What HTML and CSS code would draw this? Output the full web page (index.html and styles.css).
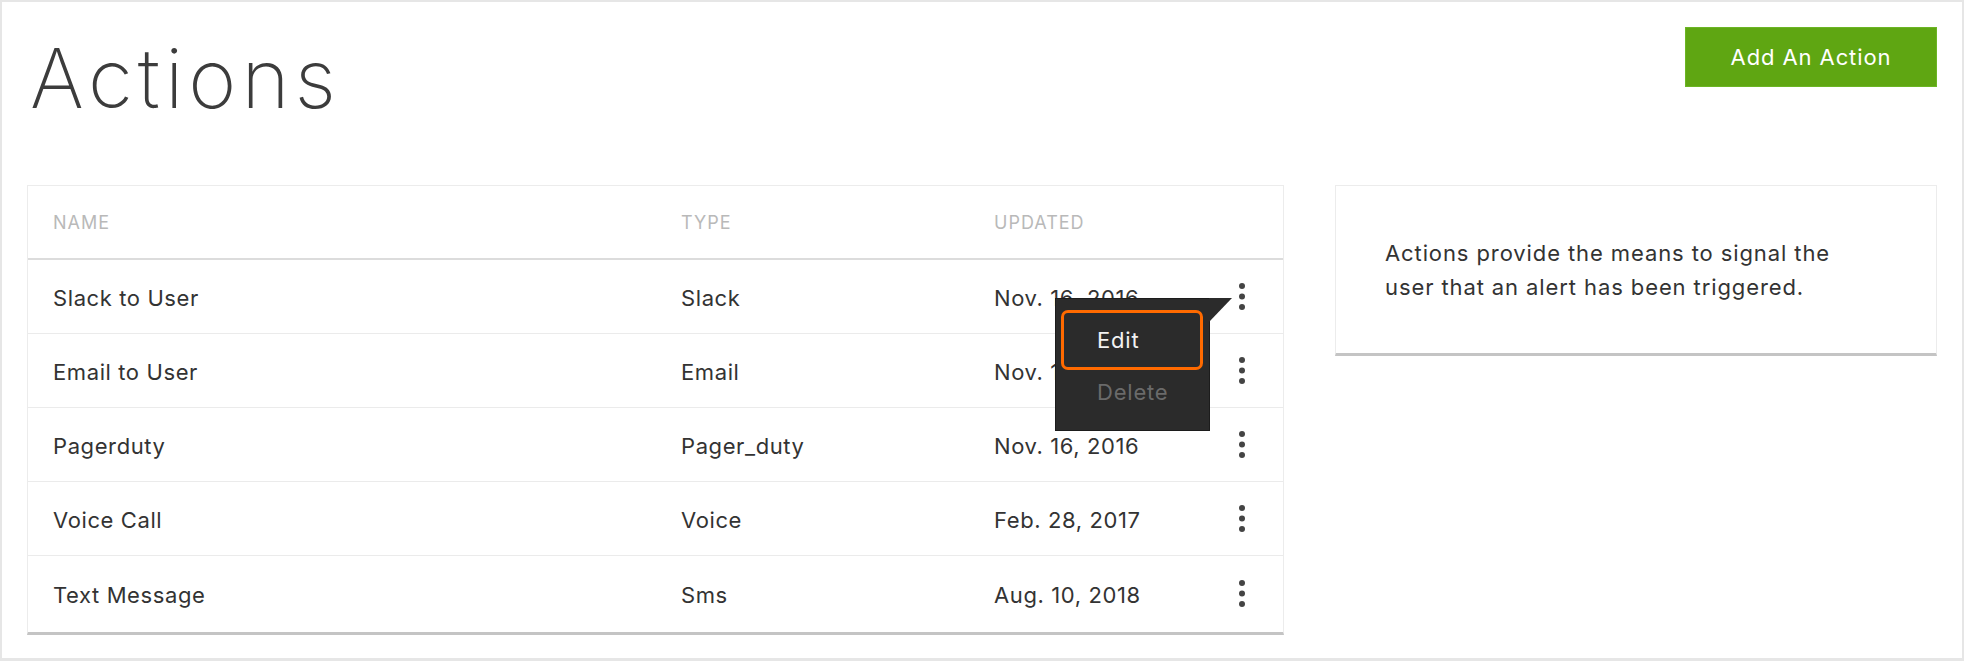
FILE: index.html
```html
<!DOCTYPE html>
<html lang="en">
<head>
<meta charset="utf-8">
<title>Actions</title>
<link rel="stylesheet" href="styles.css">
</head>
<body>
<div class="frame">
  <header class="topbar">
    <h1 class="title">Actions</h1>
    <button class="add-btn" type="button">Add An Action</button>
  </header>
  <main class="content">
    <section class="table-card">
      <div class="row head">
        <div class="cell">Name</div>
        <div class="cell">Type</div>
        <div class="cell">Updated</div>
        <div class="cell"></div>
      </div>
      <div class="row">
        <div class="cell">Slack to User</div>
        <div class="cell">Slack</div>
        <div class="cell">Nov. 16, 2016</div>
        <div class="cell kebab-cell"><svg class="kebab" width="6" height="28" viewBox="0 0 6 28"><circle cx="3" cy="3" r="3"/><circle cx="3" cy="13.5" r="3"/><circle cx="3" cy="24" r="3"/></svg></div>
      </div>
      <div class="row">
        <div class="cell">Email to User</div>
        <div class="cell">Email</div>
        <div class="cell">Nov. 16, 2016</div>
        <div class="cell kebab-cell"><svg class="kebab" width="6" height="28" viewBox="0 0 6 28"><circle cx="3" cy="3" r="3"/><circle cx="3" cy="13.5" r="3"/><circle cx="3" cy="24" r="3"/></svg></div>
      </div>
      <div class="row">
        <div class="cell">Pagerduty</div>
        <div class="cell">Pager_duty</div>
        <div class="cell">Nov. 16, 2016</div>
        <div class="cell kebab-cell"><svg class="kebab" width="6" height="28" viewBox="0 0 6 28"><circle cx="3" cy="3" r="3"/><circle cx="3" cy="13.5" r="3"/><circle cx="3" cy="24" r="3"/></svg></div>
      </div>
      <div class="row">
        <div class="cell">Voice Call</div>
        <div class="cell">Voice</div>
        <div class="cell">Feb. 28, 2017</div>
        <div class="cell kebab-cell"><svg class="kebab" width="6" height="28" viewBox="0 0 6 28"><circle cx="3" cy="3" r="3"/><circle cx="3" cy="13.5" r="3"/><circle cx="3" cy="24" r="3"/></svg></div>
      </div>
      <div class="row last">
        <div class="cell">Text Message</div>
        <div class="cell">Sms</div>
        <div class="cell">Aug. 10, 2018</div>
        <div class="cell kebab-cell"><svg class="kebab" width="6" height="28" viewBox="0 0 6 28"><circle cx="3" cy="3" r="3"/><circle cx="3" cy="13.5" r="3"/><circle cx="3" cy="24" r="3"/></svg></div>
      </div>
      <div class="menu">
        <div class="menu-item active">Edit</div>
        <div class="menu-item disabled">Delete</div>
      </div>
    </section>
    <aside class="info-card">
      <p class="info-text">Actions provide the means to signal the<br>user that an alert has been triggered.</p>
    </aside>
  </main>
</div>
</body>
</html>
```
FILE: styles.css
```css
html, body {
  margin: 0;
  padding: 0;
  background: #ffffff;
}

body {
  font-family: "Inter", "Lato", sans-serif;
  color: #333333;
}

.frame {
  width: 1964px;
  height: 661px;
  box-sizing: border-box;
  border: 2px solid #e6e6e6;
  border-bottom-width: 3px;
  background: #ffffff;
  overflow: hidden;
}

.topbar {
  display: flex;
  justify-content: space-between;
  align-items: flex-start;
  height: 183px;
  box-sizing: border-box;
  padding: 25px 25px 0 28px;
}

.title {
  margin: 11px 0 0 0;
  font-family: "Inter", sans-serif;
  font-weight: 200;
  font-size: 82px;
  line-height: 1;
  color: #3c3c3c;
  letter-spacing: 5px;
}

.add-btn {
  width: 252px;
  height: 60px;
  border: 1px solid #6cb524;
  background: #5fa612;
  color: #ffffff;
  font-family: "Inter", sans-serif;
  font-size: 22px;
  font-weight: 400;
  letter-spacing: 0.9px;
  padding: 0;
  cursor: pointer;
}

.content {
  display: flex;
  align-items: flex-start;
  gap: 51px;
  padding: 0 25px;
}

.table-card {
  position: relative;
  width: 1257px;
  box-sizing: border-box;
  border: 1px solid #ececec;
  border-bottom: 3px solid #c4c4c4;
}

.row {
  display: grid;
  grid-template-columns: 628px 313px 1fr 50px;
  align-items: center;
  height: 74px;
  box-sizing: border-box;
  padding: 2px 16px 0 25px;
  border-bottom: 1px solid #ebebeb;
  font-size: 22px;
  letter-spacing: 0.6px;
  color: #333333;
}

.row.head {
  height: 74px;
  padding-top: 0;
  border-bottom: 2px solid #dcdcdc;
  font-size: 18px;
  text-transform: uppercase;
  color: #b9b9b9;
  letter-spacing: 1px;
}

.row.last {
  border-bottom: none;
  height: 76px;
}

.cell {
  white-space: nowrap;
}

.kebab-cell {
  display: flex;
  justify-content: center;
  align-items: center;
  margin-top: -2px;
}

.kebab {
  display: block;
  fill: #444444;
}

.menu {
  position: absolute;
  left: 1027px;
  top: 112px;
  width: 155px;
  height: 133px;
  box-sizing: border-box;
  background: #2b2b2b;
  border: 1px solid #1c1c1c;
  padding: 11px 6px 0 5px;
}

.menu::after {
  content: "";
  position: absolute;
  top: -1px;
  left: 100%;
  width: 0;
  height: 0;
  border-top: 24px solid #2b2b2b;
  border-right: 23px solid transparent;
}

.menu-item {
  font-size: 22px;
  letter-spacing: 0.8px;
  line-height: 1;
  padding-left: 33px;
}

.menu-item.active {
  height: 60px;
  box-sizing: border-box;
  border: 3px solid #ff6a00;
  border-radius: 7px;
  color: #f2f2f2;
  display: flex;
  align-items: center;
}

.menu-item.disabled {
  color: #6a6a6a;
  margin-top: 11px;
  padding-left: 36px;
}

.info-card {
  width: 602px;
  height: 171px;
  box-sizing: border-box;
  border: 1px solid #ececec;
  border-bottom: 3px solid #c4c4c4;
  padding: 50px 20px 0 49px;
}

.info-text {
  margin: 0;
  font-size: 22px;
  letter-spacing: 0.9px;
  line-height: 34px;
  color: #333333;
}
```
